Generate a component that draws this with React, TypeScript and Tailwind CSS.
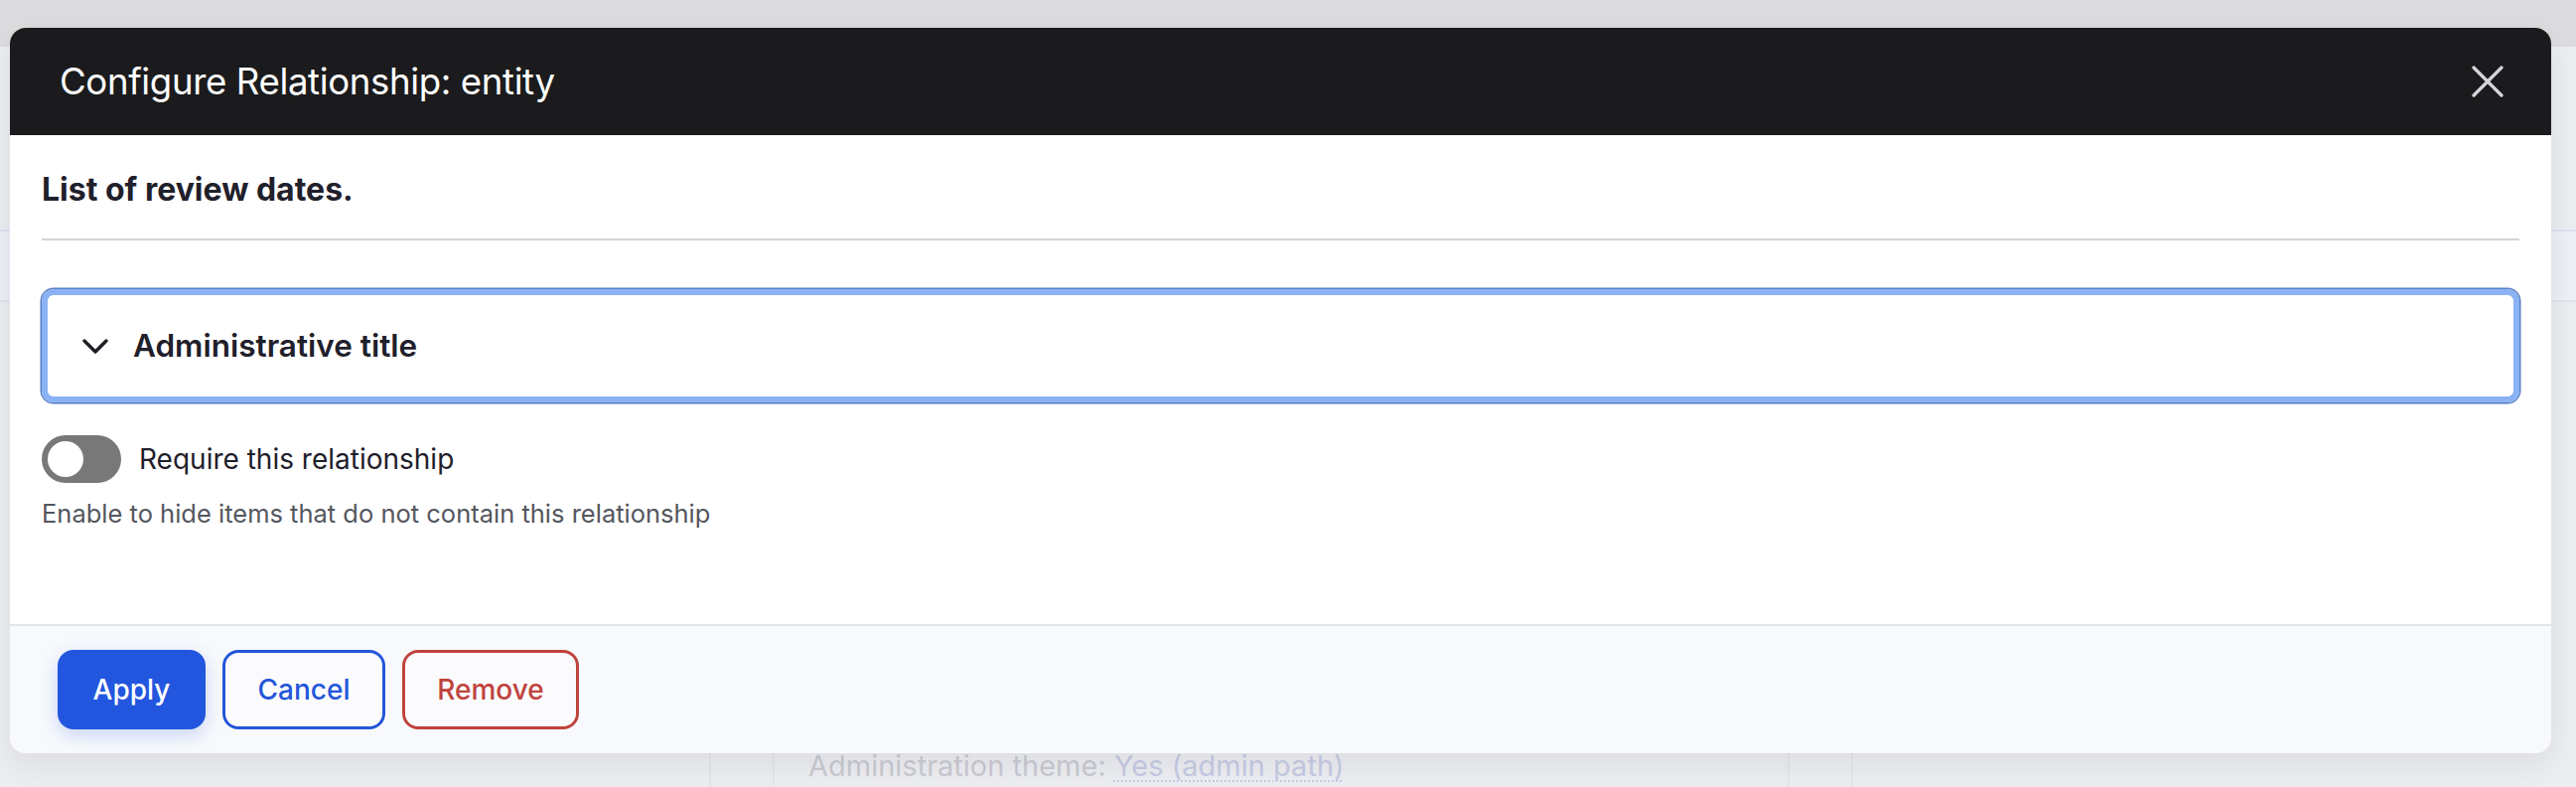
function Toggle() {
  return (
    <div className="flex h-[48px] w-[80px] shrink-0 items-center rounded-full bg-[#787878] px-[6px]">
      <div className="h-[36px] w-[36px] rounded-full bg-white" />
    </div>
  );
}

function CloseIcon() {
  return (
    <svg width="32" height="32" viewBox="0 0 32 32" className="text-[#d6d6da]">
      <path d="M2 2 30 30M30 2 2 30" stroke="currentColor" strokeWidth="3.2" strokeLinecap="round" fill="none" />
    </svg>
  );
}

function Chevron() {
  return (
    <svg width="26" height="15" viewBox="0 0 26 15" className="shrink-0 text-[#1f2026]">
      <path d="M2 2 13 13 24 2" stroke="currentColor" strokeWidth="3.4" strokeLinecap="round" strokeLinejoin="round" fill="none" />
    </svg>
  );
}

function Backdrop() {
  return (
    <div className="flex h-[792px] w-full flex-col bg-[#ecedf1]">
      <div className="h-[47px] w-full shrink-0 bg-[#dcdcdf]" />
      <div className="mt-[184px] h-[73px] w-full shrink-0 border-y-2 border-[#dfe2f1] bg-[#eeeff5]" />
      <div className="flex flex-1">
        <div className="w-[714px] shrink-0" />
        <div className="w-[66px] shrink-0 border-x-2 border-[#e4e5ea]" />
        <div className="flex w-[1020px] shrink-0 flex-col justify-end pb-[2px] pl-[34px]">
          <p className="text-[29px] leading-[38px] text-[#c9cad1]">
            Administration theme:{" "}
            <span className="text-[#c6cbe4] underline decoration-dotted decoration-2 underline-offset-4">
              Yes (admin path)
            </span>
          </p>
        </div>
        <div className="w-[66px] shrink-0 border-x-2 border-[#e4e5ea]" />
      </div>
    </div>
  );
}

export default function App() {
  return (
    <div className="relative h-[792px] w-[2594px] overflow-hidden font-['Inter',sans-serif]">
      <Backdrop />

      {/* Dialog */}
      <div className="absolute left-[10px] top-[28px] flex h-[730px] w-[2559px] flex-col overflow-hidden rounded-[16px] bg-white shadow-[0_10px_30px_rgba(20,20,40,0.08)]">
        <header className="flex h-[108px] shrink-0 items-center justify-between bg-[#1b1b1d] pl-[50px] pr-[48px]">
          <h1 className="text-[36.6px] font-normal tracking-[-0.01em] text-white">
            Configure Relationship: entity
          </h1>
          <CloseIcon />
        </header>

        <div className="flex flex-1 flex-col px-[32px] pt-[35px]">
          <h2 className="border-b-2 border-[#d4d5da] pb-[29px] text-[32px] font-bold leading-[40px] text-[#1f202b]">
            List of review dates.
          </h2>

          <div className="mt-[49px] rounded-[12px] border-[6px] border-[#8ab2f4] shadow-[0_0_0_1.5px_#5a80c4]">
            <div className="flex h-[102px] items-center gap-[25px] rounded-[7px] bg-white pl-[35px]">
              <Chevron />
              <span className="text-[31.5px] font-semibold text-[#1f202b]">Administrative title</span>
            </div>
          </div>

          <div className="mt-[33px] flex items-center gap-[18px]">
            <Toggle />
            <span className="text-[28px] text-[#1f202b]">Require this relationship</span>
          </div>
          <p className="mt-[15px] text-[25.5px] leading-[32px] text-[#55565e]">
            Enable to hide items that do not contain this relationship
          </p>
        </div>

        <footer className="flex h-[130px] shrink-0 items-center gap-[17px] border-t-2 border-[#e3e4ea] bg-[#f8f9fc] pl-[48px]">
          <button className="h-[80px] w-[149px] rounded-[16px] bg-[#2256de] text-[28px] font-medium text-white shadow-[0_6px_18px_rgba(34,86,222,0.22)]">
            Apply
          </button>
          <button className="h-[80px] w-[164px] rounded-[16px] border-[3px] border-[#2456d9] bg-white/40 text-[28px] font-medium text-[#2456d9]">
            Cancel
          </button>
          <button className="h-[80px] w-[178px] rounded-[16px] border-[3px] border-[#bf433d] bg-white/40 text-[28px] font-medium text-[#bf433d]">
            Remove
          </button>
        </footer>
      </div>
    </div>
  );
}
